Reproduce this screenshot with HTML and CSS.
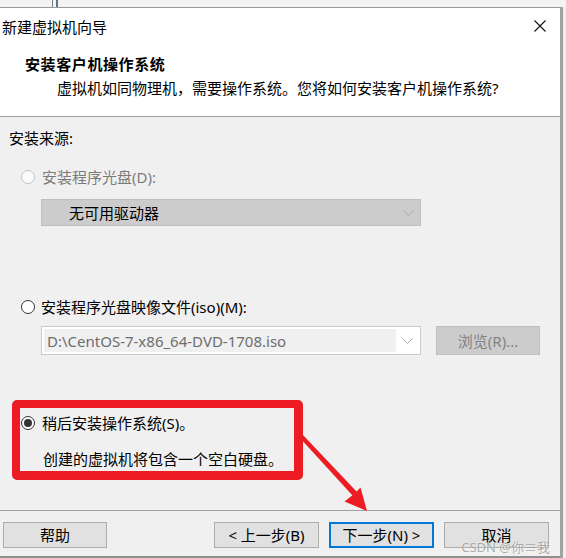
FILE: index.html
```html
<!DOCTYPE html>
<html lang="zh-CN">
<head>
<meta charset="utf-8">
<title>新建虚拟机向导</title>
<link rel="stylesheet" href="styles.css">
</head>
<body>
<div class="screen">
  <div class="strip"><span class="bgline"></span></div>
  <div class="window">
    <div class="dialog">
      <div class="titlebar">
        <span class="title">新建虚拟机向导</span>
        <svg class="close" width="12" height="12" viewBox="0 0 12 12"><path d="M0.5 0.5 L11.5 11.5 M11.5 0.5 L0.5 11.5" stroke="#111" stroke-width="1.1" fill="none"/></svg>
      </div>
      <div class="header">
        <div class="h-title">安装客户机操作系统</div>
        <div class="h-sub">虚拟机如同物理机，需要操作系统。您将如何安装客户机操作系统?</div>
      </div>
      <div class="content">
        <div class="label">安装来源:</div>
        <div class="radio-row r1 disabled"><span class="radio"></span><span>安装程序光盘(D):</span></div>
        <div class="select">
          <span>无可用驱动器</span>
          <svg class="chev" width="11" height="6" viewBox="0 0 11 6"><path d="M0.5 0.5 L5.5 5.5 L10.5 0.5" stroke="#a8a8a8" stroke-width="1" fill="none"/></svg>
        </div>
        <div class="radio-row r2"><span class="radio"></span><span>安装程序光盘映像文件(iso)(M):</span></div>
        <div class="iso-row">
          <div class="combo">
            <div class="field">D:\CentOS-7-x86_64-DVD-1708.iso</div>
            <div class="chev-box"><svg class="chev" width="11" height="6" viewBox="0 0 11 6"><path d="M0.5 0.5 L5.5 5.5 L10.5 0.5" stroke="#a8a8a8" stroke-width="1" fill="none"/></svg></div>
          </div>
          <div class="browse">浏览(R)...</div>
        </div>
        <div class="highlight">
          <div class="radio-row r3"><span class="radio checked"></span><span>稍后安装操作系统(S)。</span></div>
          <div class="desc">创建的虚拟机将包含一个空白硬盘。</div>
        </div>
      </div>
      <div class="footer">
        <div class="btn help">帮助</div>
        <div class="spacer"></div>
        <div class="btn">&lt; 上一步(B)</div>
        <div class="btn primary">下一步(N) &gt;</div>
        <div class="btn">取消</div>
      </div>
    </div>
    <div class="edge"></div>
  </div>
  <svg class="arrow" width="566" height="558" viewBox="0 0 566 558">
    <polygon points="299,437 302,434 357,492 353,496" fill="#ed1c24"/>
    <polygon points="367,511 344.5,501.5 354,494 360.5,487.5" fill="#ed1c24"/>
  </svg>
  <div class="watermark">CSDN @你≡我</div>
</div>
</body>
</html>
```
FILE: styles.css
```css
body {
  margin: 0;
}

.screen {
  position: relative;
  width: 566px;
  height: 558px;
  overflow: hidden;
  background: #eeeeee;
  display: flex;
  flex-direction: column;
  font-family: "Noto Sans", "Noto Sans CJK SC", sans-serif;
  font-size: 15px;
  line-height: 20px;
  color: #000;
}

.strip {
  height: 7px;
  flex: none;
  background: #f3f3f3;
  display: flex;
}

.bgline {
  margin-left: 52px;
  width: 3px;
  height: 7px;
  border-left: 1px solid #7a7a7a;
  border-right: 2px solid #5a7590;
}

.window {
  display: flex;
  flex: 1;
}

.dialog {
  width: 560px;
  flex: none;
  display: flex;
  flex-direction: column;
  border-top: 1px solid #9a9a9a;
  border-bottom: 2px solid #8e8e8e;
  background: #f0f0f0;
}

.edge {
  width: 3px;
  background: #a2a2a2;
  flex: none;
}

.titlebar {
  height: 38px;
  background: #fff;
  display: flex;
  align-items: center;
  justify-content: space-between;
  padding: 0 14px 0 2px;
}

.close {
  display: block;
  margin-top: -2px;
}

.header {
  height: 71px;
  box-sizing: border-box;
  background: #fff;
  border-bottom: 1px solid #a0a0a0;
  padding-top: 8px;
}

.h-title {
  font-weight: 700;
  padding-left: 25px;
  letter-spacing: 0.6px;
}

.h-sub {
  margin-top: 4px;
  padding-left: 57px;
}

.content {
  flex: 1;
  padding-top: 11px;
}

.label {
  padding-left: 9px;
}

.radio-row {
  display: flex;
  align-items: center;
  gap: 7px;
}

.r1 {
  margin-top: 19px;
  padding-left: 21px;
}

.r2 {
  margin-top: 71px;
  padding-left: 21px;
  gap: 6px;
}

.disabled {
  color: #7b7b7b;
}

.radio {
  width: 14px;
  height: 14px;
  box-sizing: border-box;
  border-radius: 50%;
  border: 1px solid #333;
  background: #fff;
  flex: none;
  display: flex;
  align-items: center;
  justify-content: center;
}

.disabled .radio {
  border-color: #c2c2c2;
  background: #fbfbfb;
}

.radio.checked::after {
  content: "";
  width: 8px;
  height: 8px;
  border-radius: 50%;
  background: #333;
}

.select {
  margin-top: 12px;
  margin-left: 41px;
  width: 380px;
  height: 27px;
  box-sizing: border-box;
  background: #cccccc;
  border: 1px solid #bfbfbf;
  display: flex;
  align-items: center;
  justify-content: space-between;
  padding: 0 6px 0 27px;
}

.chev {
  display: block;
}

.iso-row {
  margin-top: 9px;
  display: flex;
  height: 29px;
}

.combo {
  margin-left: 41px;
  width: 380px;
  box-sizing: border-box;
  border: 1px solid #cacaca;
  background: #fff;
  padding: 2px;
  display: flex;
}

.field {
  flex: 1;
  background: #f0f0f0;
  color: #6d6d6d;
  padding-left: 3px;
  display: flex;
  align-items: center;
}

.chev-box {
  width: 22px;
  display: flex;
  align-items: center;
  justify-content: center;
}

.browse {
  margin-left: 15px;
  width: 104px;
  box-sizing: border-box;
  background: #cccccc;
  border: 1px solid #bfbfbf;
  color: #838383;
  display: flex;
  align-items: center;
  justify-content: center;
}

.highlight {
  margin-top: 45px;
  margin-left: 12px;
  width: 291px;
  box-sizing: border-box;
  border-style: solid;
  border-color: #ed1c24;
  border-width: 8px 9px 9px 8px;
  border-radius: 5px;
  padding: 5px 0 2px 1px;
}

.r3 {
  gap: 7px;
}

.desc {
  margin-top: 16px;
  padding-left: 22px;
}

.footer {
  height: 46px;
  box-sizing: border-box;
  border-top: 1px solid #a0a0a0;
  padding: 11px 11px 0 3px;
  display: flex;
  align-items: flex-start;
  gap: 10px;
}

.spacer {
  flex: 1;
}

.btn {
  width: 105px;
  height: 26px;
  box-sizing: border-box;
  background: #e1e1e1;
  border: 1px solid #adadad;
  display: flex;
  align-items: center;
  justify-content: center;
}

.btn.help {
  width: 104px;
}

.btn.primary {
  border: 2px solid #0078d7;
}

.arrow {
  position: absolute;
  left: 0;
  top: 0;
  pointer-events: none;
}

.watermark {
  position: absolute;
  right: 16px;
  bottom: 3px;
  font-size: 13px;
  line-height: 16px;
  color: rgba(110, 110, 110, 0.55);
  text-shadow: 0 0 2px rgba(255, 255, 255, 0.8);
  letter-spacing: 0;
}
```
